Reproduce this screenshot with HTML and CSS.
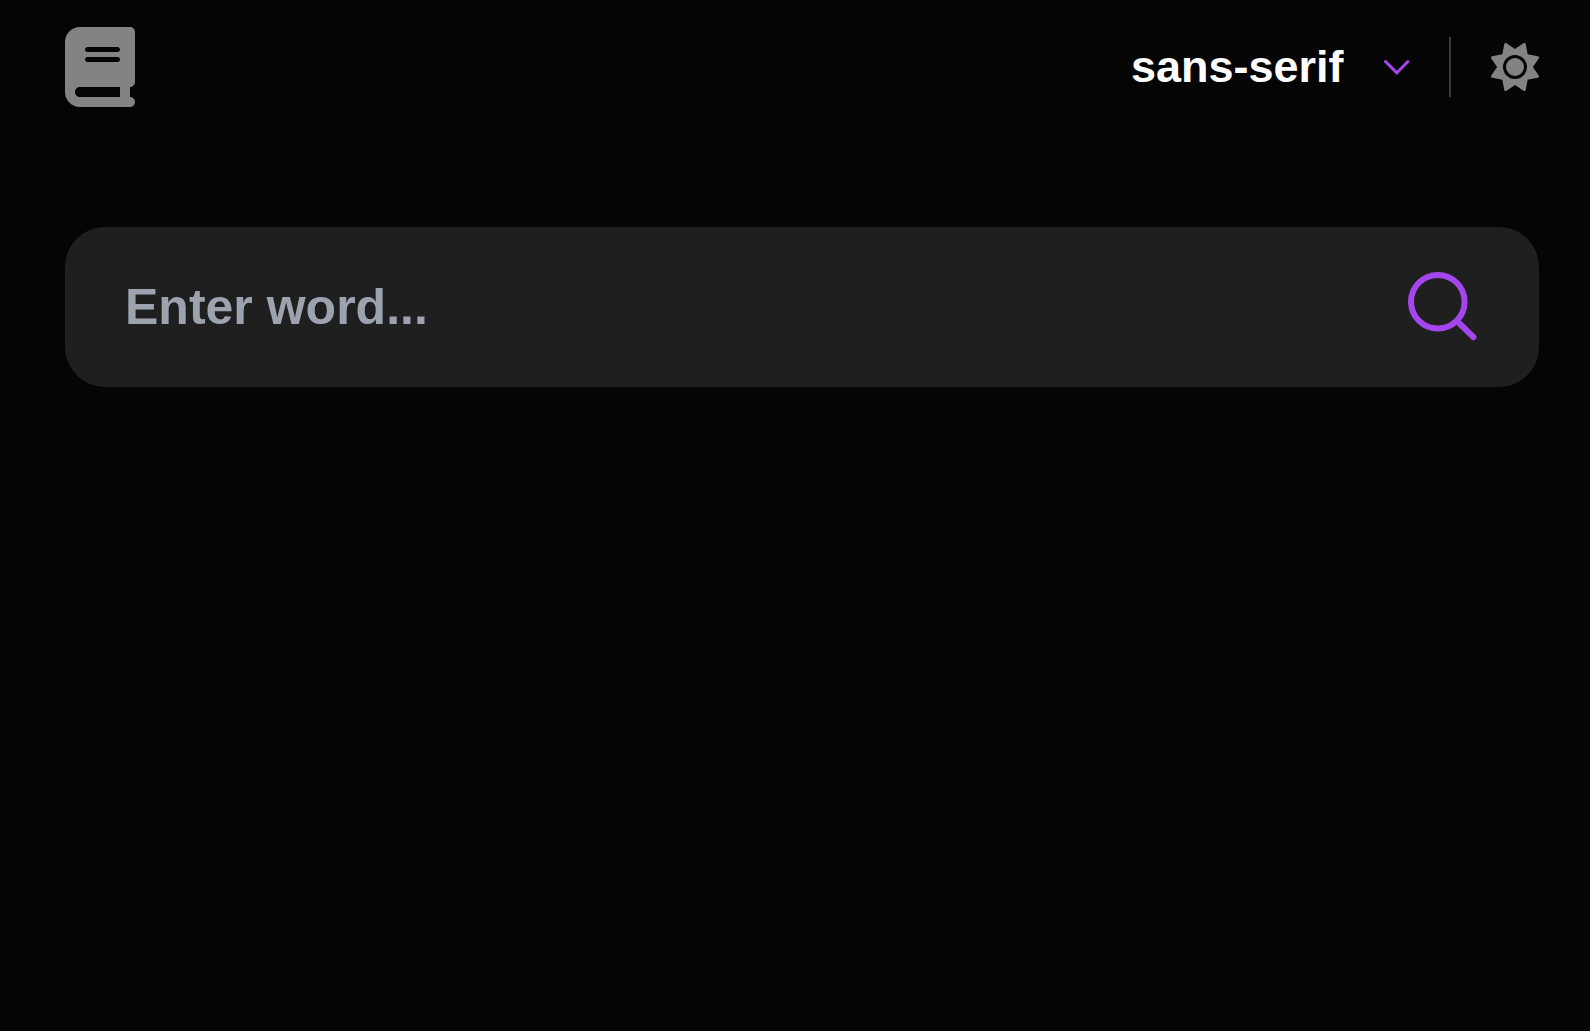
FILE: index.html
```html
<!DOCTYPE html>
<html lang="en">
<head>
  <meta charset="UTF-8">
  <meta name="viewport" content="width=device-width, initial-scale=1.0">
  <title>Dictionary</title>
  <link rel="stylesheet" href="styles.css">
</head>
<body>
  <header class="header">
    <a class="logo" href="#" aria-label="Dictionary home">
      <svg width="70" height="80" viewBox="0 0 448 512" fill="currentColor" aria-hidden="true">
        <path d="M96 0C43 0 0 43 0 96V416c0 53 43 96 96 96H384h32c17.7 0 32-14.3 32-32s-14.3-32-32-32V384c17.7 0 32-14.3 32-32V32c0-17.7-14.3-32-32-32H384 96zm0 384H352v64H96c-17.7 0-32-14.3-32-32s14.3-32 32-32zm32-240c0-8.8 7.2-16 16-16H336c8.8 0 16 7.2 16 16s-7.2 16-16 16H144c-8.8 0-16-7.2-16-16zm16 48H336c8.8 0 16 7.2 16 16s-7.2 16-16 16H144c-8.8 0-16-7.2-16-16s7.2-16 16-16z"/>
      </svg>
    </a>

    <div class="settings">
      <label class="font-picker">
        <select class="font-select" aria-label="Font">
          <option selected>sans-serif</option>
          <option>serif</option>
          <option>mono</option>
        </select>
        <svg class="chevron" width="25" height="16" viewBox="0 0 25 16" fill="none" stroke="currentColor" stroke-width="3" stroke-linecap="round" aria-hidden="true">
          <path d="M1.5 2.5l11.3 11.3L24 2.5"/>
        </svg>
      </label>
      <span class="divider"></span>
      <button class="theme-btn" type="button" aria-label="Toggle theme">
        <svg width="48" height="48" viewBox="0 0 512 512" fill="currentColor" aria-hidden="true">
          <path d="M361.5 1.2c5 2.1 8.6 6.6 9.6 11.9L391 121l107.9 19.8c5.3 1 9.8 4.6 11.9 9.6s1.5 10.7-1.6 15.2L446.9 256l62.3 90.3c3.1 4.5 3.7 10.2 1.6 15.2s-6.6 8.6-11.9 9.6L391 391 371.1 498.9c-1 5.3-4.6 9.8-9.6 11.9s-10.7 1.5-15.2-1.6L256 446.9l-90.3 62.3c-4.5 3.1-10.2 3.7-15.2 1.6s-8.6-6.6-9.6-11.9L121 391 13.1 371.1c-5.3-1-9.8-4.6-11.9-9.6s-1.5-10.7 1.6-15.2L65.1 256 2.8 165.7c-3.1-4.5-3.7-10.2-1.6-15.2s6.6-8.6 11.9-9.6L121 121 140.9 13.1c1-5.3 4.6-9.8 9.6-11.9s10.7-1.5 15.2 1.6L256 65.1 346.3 2.8c4.5-3.1 10.2-3.7 15.2-1.6zM160 256a96 96 0 1 1 192 0 96 96 0 1 1 -192 0zm224 0a128 128 0 1 0 -256 0 128 128 0 1 0 256 0z"/>
        </svg>
      </button>
    </div>
  </header>

  <main>
    <form class="search">
      <input class="search-input" type="text" name="word" placeholder="Enter word..." aria-label="Word">
      <button class="search-btn" type="submit" aria-label="Search">
        <svg width="74" height="74" viewBox="0 0 74 74" fill="none" stroke="currentColor" stroke-width="6" stroke-linecap="round" aria-hidden="true">
          <circle cx="32.8" cy="31.7" r="26.8"/>
          <path d="M52 51l16.4 16.2"/>
        </svg>
      </button>
    </form>
  </main>
</body>
</html>
```

FILE: styles.css
```css
* {
  box-sizing: border-box;
}
body {
  margin: 0;
  padding: 27px 51px 27px 65px;
  background: #050505;
  color: #fff;
  font-family: "Liberation Sans", Arial, sans-serif;
}
svg {
  display: block;
}
button {
  padding: 0;
  border: none;
  background: none;
  cursor: pointer;
}

/* Header */
.header {
  display: flex;
  justify-content: space-between;
  align-items: center;
  margin-bottom: 120px;
}
.logo, .theme-btn {
  color: #838383;
}
.settings, .font-picker {
  display: flex;
  align-items: center;
  gap: 40px;
}
.font-select {
  appearance: none;
  padding: 0 0 2px;
  border: none;
  background: #050505;
  color: #fff;
  font-family: inherit;
  font-size: 45px;
  font-weight: bold;
  cursor: pointer;
}
.chevron, .search-btn {
  color: #a445ed;
}
.divider {
  width: 2px;
  height: 60px;
  background: #3a3a3a;
}

/* Search */
.search {
  display: flex;
  align-items: center;
  height: 160px;
  padding: 0 60px;
  border-radius: 40px;
  background: #1f1f1f;
}
.search-input {
  flex: 1;
  min-width: 0;
  height: 100%;
  padding: 0;
  border: none;
  outline: none;
  background: none;
  color: #fff;
  font-family: inherit;
  font-size: 50px;
  font-weight: bold;
}
.search-input::placeholder {
  color: #9ca3af;
}
```
